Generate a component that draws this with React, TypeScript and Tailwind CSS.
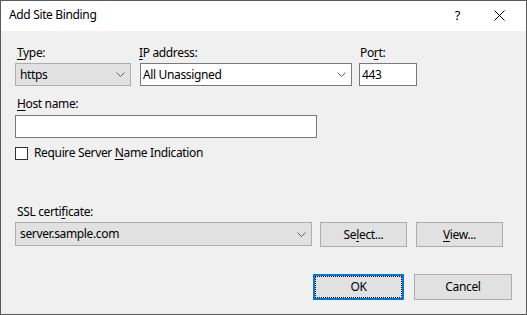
import React from "react";

const font = { fontFamily: '"Noto Sans", "Open Sans", sans-serif' };

function Chevron() {
  return (
    <svg width="9" height="5" viewBox="0 0 9 5" className="shrink-0">
      <path d="M0.5 0.5 L4.5 4.5 L8.5 0.5" fill="none" stroke="#606060" strokeWidth="1" />
    </svg>
  );
}

function U({ children }: { children: React.ReactNode }) {
  return <span className="underline underline-offset-[2px] decoration-[1px]">{children}</span>;
}

export default function App() {
  return (
    <div
      className="w-[527px] h-[315px] border border-[#5a5a5a] flex flex-col text-[12px] leading-[16px] tracking-[-0.35px] text-black box-border overflow-hidden"
      style={font}
    >
      {/* Title bar */}
      <div className="h-[30px] bg-white flex items-center pl-[8px] pb-[2px] shrink-0">
        <span>Add Site Binding</span>
        <span className="ml-auto text-[13px]">?</span>
        <svg width="11" height="11" viewBox="0 0 11 11" className="ml-[34px] mr-[21px] mt-[1px]">
          <path d="M0.5 0.5 L10.5 10.5 M10.5 0.5 L0.5 10.5" stroke="#000" strokeWidth="1" />
        </svg>
      </div>

      {/* Body */}
      <div className="flex-1 bg-[#f0f0f0] pl-[14px] pt-[14px] flex flex-col">
        {/* Row 1 */}
        <div className="flex">
          <div className="w-[116px] flex flex-col">
            <div className="pl-[2px]">
              <U>T</U>ype:
            </div>
            <div className="mt-[2px] h-[23px] bg-[#e1e1e1] border border-[#adadad] flex items-center pl-[4px] pr-[5px]">
              <span className="flex-1">https</span>
              <Chevron />
            </div>
          </div>
          <div className="w-[212px] ml-[9px] flex flex-col">
            <div className="-ml-[1px]">
              <U>I</U>P address:
            </div>
            <div className="mt-[2px] h-[23px] bg-white border border-[#7a7a7a] flex items-center pl-[2px] pr-[5px]">
              <span className="flex-1">All Unassigned</span>
              <Chevron />
            </div>
          </div>
          <div className="w-[58px] ml-[7px] flex flex-col">
            <div className="pl-[1px]">
              Po<U>r</U>t:
            </div>
            <div className="mt-[2px] h-[23px] bg-white border border-[#7a7a7a] flex items-center pl-[2px]">
              443
            </div>
          </div>
        </div>

        {/* Host name */}
        <div className="mt-[10px] pl-[2px]">
          <U>H</U>ost name:
        </div>
        <div className="mt-[3px] w-[302px] h-[23px] bg-white border border-[#7a7a7a]" />

        {/* Checkbox */}
        <div className="mt-[7px] flex items-start">
          <div className="mt-[2px] w-[13px] h-[13px] bg-white border border-[#333333]" />
          <span className="ml-[6px]">
            Require Server <U>N</U>ame Indication
          </span>
        </div>

        {/* SSL certificate */}
        <div className="mt-[43px] pl-[2px]">
          SSL certi<U>f</U>icate:
        </div>
        <div className="mt-[2px] flex items-start">
          <div className="w-[297px] h-[24px] bg-[#e1e1e1] border border-[#adadad] flex items-center pl-[4px] pr-[5px]">
            <span className="flex-1">server.sample.com</span>
            <Chevron />
          </div>
          <button className="ml-[8px] w-[87px] h-[25px] bg-[#e1e1e1] border border-[#adadad] flex items-center justify-center">
            <span>
              Se<U>l</U>ect...
            </span>
          </button>
          <button className="ml-[9px] w-[87px] h-[25px] bg-[#e1e1e1] border border-[#adadad] flex items-center justify-center">
            <span>
              <U>V</U>iew...
            </span>
          </button>
        </div>

        {/* Bottom buttons */}
        <div className="mt-[27px] flex justify-end pr-[14px]">
          <button className="w-[91px] h-[26px] bg-[#e1e1e1] border-2 border-[#0078d7] p-0">
            <div className="w-full h-full border border-dotted border-black flex items-center justify-center">
              OK
            </div>
          </button>
          <button className="ml-[10px] w-[98px] h-[26px] bg-[#e1e1e1] border border-[#adadad] flex items-center justify-center">
            Cancel
          </button>
        </div>
      </div>
    </div>
  );
}
